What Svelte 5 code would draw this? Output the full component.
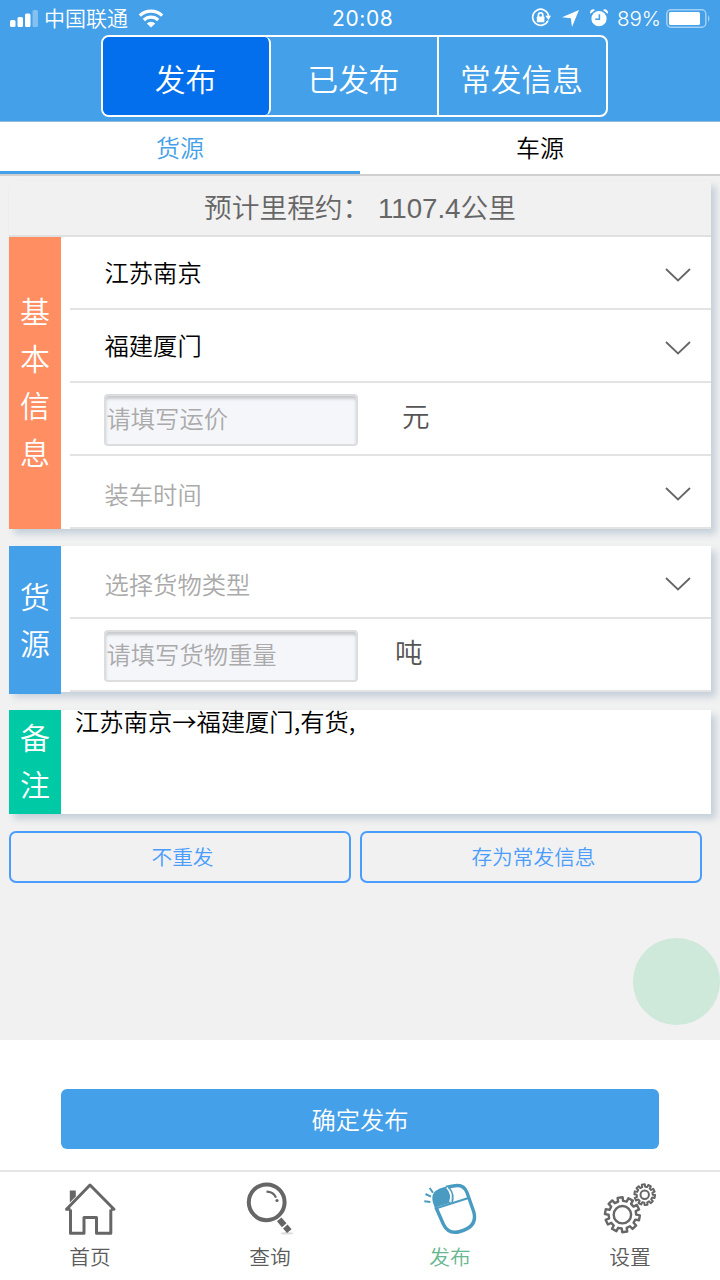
<script lang="ts">
	const segments = ['发布', '已发布', '常发信息'];
	const tabs = ['货源', '车源'];
	const navItems = [
		{ id: 'home', label: '首页' },
		{ id: 'search', label: '查询' },
		{ id: 'publish', label: '发布' },
		{ id: 'settings', label: '设置' }
	];

	let segment = $state(0);
	let tab = $state(0);
	let nav = $state('publish');
	let price = $state('');
	let weight = $state('');
	let remark = $state('江苏南京→福建厦门,有货,');

	// outline of a cog centred on cx, cy
	function gear(cx: number, cy: number, outer: number, inner: number, teeth: number, turn = 0) {
		const step = (Math.PI * 2) / teeth;
		const points: string[] = [];
		for (let i = 0; i < teeth; i++) {
			const a = i * step + turn;
			for (const [offset, r] of [[-0.29, inner], [-0.23, outer], [0.23, outer], [0.29, inner]]) {
				const t = a + offset * step;
				points.push(`${(cx + Math.cos(t) * r).toFixed(2)} ${(cy + Math.sin(t) * r).toFixed(2)}`);
			}
		}
		return `M${points.join('L')}Z`;
	}
</script>

{#snippet chevron()}
	<svg class="chevron" viewBox="0 0 26 15" width="26" height="15">
		<path d="M1 2L13 13.5L25 2" />
	</svg>
{/snippet}

{#snippet selectRow(text: string, placeholder: boolean)}
	<button class="row select" class:placeholder>
		<span>{text}</span>
		{@render chevron()}
	</button>
{/snippet}

<div class="app">
	<header>
		<div class="status">
			<svg class="signal" viewBox="0 0 28 18" width="28" height="18">
				<rect x="0" y="11" width="5.5" height="7" rx="1.5" />
				<rect x="7.5" y="8" width="5.5" height="10" rx="1.5" />
				<rect x="15" y="4.5" width="5.5" height="13.5" rx="1.5" />
				<rect x="22.5" y="1" width="5.5" height="17" rx="1.5" opacity="0.35" />
			</svg>
			<span class="carrier">中国联通</span>
			<svg class="wifi" viewBox="0 0 26 19" width="26" height="19">
				<path d="M1.8 6.6a16 16 0 0 1 22.4 0" />
				<path d="M5.8 11a10.3 10.3 0 0 1 14.4 0" />
				<path class="dot" d="M8.8 14.4a6 6 0 0 1 8.4 0L13 18.5z" />
			</svg>
			<span class="clock">20:08</span>
			<div class="status-right">
				<svg class="lock" viewBox="0 0 20 20" width="20" height="20">
					<path class="line" d="M17 12.5A8 8 0 1 1 17.6 8.2" />
					<path d="M14.2 7.7h5.8l-2.5 4.2z" />
					<rect x="5.8" y="8.5" width="7.6" height="5.8" rx="0.8" />
					<path class="line" d="M7.4 9V7.1a2.2 2.2 0 0 1 4.4 0V9" />
				</svg>
				<svg class="arrow" viewBox="0 0 17 17" width="17" height="17">
					<path d="M17 0L10 17L8.8 8.3L0 7.2z" />
				</svg>
				<svg class="alarm" viewBox="0 0 18 18" width="18" height="18">
					<circle cx="9" cy="9.7" r="7.6" />
					<path d="M0.5 4.8A3 3 0 0 1 5 1zM17.5 4.8A3 3 0 0 0 13 1z" />
					<path class="hands" d="M9.4 5.2v5H5.2" />
				</svg>
				<span class="percent">89%</span>
				<svg class="battery" viewBox="0 0 45 19" width="45" height="19">
					<rect class="shell" x="0.8" y="0.8" width="39" height="17.4" rx="4" />
					<rect x="3" y="3" width="31" height="13" rx="1.5" />
					<path d="M42 6q3 3.5 0 7z" opacity="0.5" />
				</svg>
			</div>
		</div>
		<div class="segments">
			{#each segments as label, i}
				<button class="segment" class:active={segment === i} onclick={() => (segment = i)}>{label}</button>
			{/each}
		</div>
	</header>

	<div class="tabs">
		{#each tabs as label, i}
			<button class="tab" class:active={tab === i} onclick={() => (tab = i)}>{label}</button>
		{/each}
	</div>

	<main>
		<section class="card">
			<div class="distance">预计里程约： <span>1107.4</span>公里</div>
			<div class="group">
				<div class="side orange">
					{#each '基本信息' as char}<span>{char}</span>{/each}
				</div>
				<div class="rows">
					{@render selectRow('江苏南京', false)}
					{@render selectRow('福建厦门', false)}
					<div class="row">
						<input placeholder="请填写运价" bind:value={price} />
						<span class="unit price">元</span>
					</div>
					{@render selectRow('装车时间', true)}
				</div>
			</div>
		</section>

		<section class="card goods">
			<div class="group">
				<div class="side blue">
					{#each '货源' as char}<span>{char}</span>{/each}
				</div>
				<div class="rows">
					{@render selectRow('选择货物类型', true)}
					<div class="row">
						<input placeholder="请填写货物重量" bind:value={weight} />
						<span class="unit">吨</span>
					</div>
				</div>
			</div>
		</section>

		<section class="card remark">
			<div class="side green">
				{#each '备注' as char}<span>{char}</span>{/each}
			</div>
			<textarea bind:value={remark}></textarea>
		</section>

		<div class="actions">
			<button>不重发</button>
			<button>存为常发信息</button>
		</div>
		<div class="bubble"></div>
	</main>

	<div class="submit">
		<button>确定发布</button>
	</div>

	<nav>
		{#each navItems as item}
			<button class="nav-item" class:active={nav === item.id} onclick={() => (nav = item.id)}>
				<svg viewBox="0 0 54 54" width="54" height="54">
					{#if item.id === 'home'}
						<path class="fill" d="M6.8 8.5h6v6l-6 6z" />
						<path class="stroke" d="M7.5 27.5V51.2H21V35.5H33.5V51.2H47.8V27.5M7.5 27.3H3.5L27 3L51 27.3H47.8" />
					{:else if item.id === 'search'}
						<ellipse cx="44" cy="51.3" rx="6.5" ry="1.3" fill="#ddd" />
						<circle class="stroke ring" cx="23.7" cy="20.3" r="17.9" />
						<path class="stroke arc" d="M23.5 9.6q7 0 9.5 6" />
						<circle class="fill" cx="34" cy="18.5" r="1.6" />
						<path class="handle" d="M36.2 37.4l5 5.8" />
						<path class="handle" d="M42.3 44.5l4 4.6" />
					{:else if item.id === 'publish'}
						<g class="mouse">
							<path class="button" d="M11.8 25.5C9.5 20 8.6 16 10 12.5C12 7.5 18 6 23.5 4.5C28 9 30 16 27.5 20.8Z" />
							<path class="body" d="M12.8 25L20.5 42.5C24 49.5 30 51.5 37 49.5C48 46.5 53.5 40 50.8 30L44 10.5C41.5 4 36 2.5 30 4L23 5.5" />
							<path class="divide" d="M12.5 26.5L45.5 16" />
							<path class="gap" d="M23.8 5.5Q29.8 12 26.8 20" />
							<path class="split" d="M26 5.5Q32 13 29 21" />
							<path class="spark" d="M6.7 6l3.3 4.7M2.5 12l5.500 2.7M1.3 19.2l6 .8" />
						</g>
					{:else}
						<path class="stroke cog" d={gear(19.4, 32.7, 17.5, 13.8, 10, 0.18)} />
						<circle class="stroke cog" cx="19.4" cy="32.7" r="8.7" />
						<path class="stroke cog small" d={gear(41.7, 12.7, 10.4, 8, 10, 0.18)} />
						<circle class="stroke cog small" cx="41.7" cy="12.7" r="4.2" />
					{/if}
				</svg>
				<span>{item.label}</span>
			</button>
		{/each}
	</nav>
</div>

<style>
	:global(body) {
		background: #fff;
	}

	.app {
		width: 720px;
		height: 1280px;
		display: flex;
		flex-direction: column;
		overflow: hidden;
		font-family: 'Liberation Sans', 'Noto Sans CJK SC', sans-serif;
		font-weight: 350;
		color: #000;
	}

	.app * {
		box-sizing: border-box;
	}

	button,
	input,
	textarea {
		font: inherit;
		color: inherit;
		background: none;
		border: 0;
		border-radius: 0;
		padding: 0;
		margin: 0;
		outline: 0;
	}

	header {
		height: 122px;
		flex: none;
		background: #44a0e8;
		border-bottom: 1px solid #93b7d6;
		color: #fff;
	}

	.status {
		height: 35px;
		display: flex;
		align-items: center;
		padding: 1px 10px 0;
		font-size: 21px;
		line-height: 34px;
		fill: #fff;
	}

	.carrier {
		margin-left: 6px;
		width: 84px;
		padding-top: 2px;
	}

	.wifi {
		margin-left: 10px;
		fill: none;
		stroke: #fff;
		stroke-width: 3.2;
	}

	.wifi .dot {
		fill: #fff;
		stroke: none;
	}

	.clock {
		margin-left: 168px;
		padding-top: 2px;
		width: 64px;
		font-family: Inter, sans-serif;
		font-weight: 400;
		font-size: 21px;
		letter-spacing: 0.6px;
	}

	.status-right {
		display: flex;
		align-items: center;
		margin-left: auto;
		margin-right: -1px;
	}

	.lock .line {
		fill: none;
		stroke: #fff;
		stroke-width: 1.7;
	}

	.arrow {
		margin-left: 11px;
	}

	.alarm {
		margin-left: 11px;
	}

	.alarm .hands {
		fill: none;
		stroke: #44a0e8;
		stroke-width: 1.5;
	}

	.percent {
		margin-left: 9px;
		padding-top: 2px;
		width: 44px;
		font-family: Inter, sans-serif;
		font-size: 20.5px;
		white-space: nowrap;
	}

	.battery {
		margin-left: 5px;
	}

	.battery .shell {
		fill: none;
		stroke: #fff;
		stroke-width: 1.5;
		opacity: 0.5;
	}

	.segments {
		display: grid;
		grid-template-columns: 168px 166px 169px;
		width: 507px;
		height: 82px;
		margin-left: 101px;
		border: 2px solid #fff;
		border-radius: 8px;
	}

	.segment {
		font-size: 30.7px;
		height: 78px;
		padding-top: 3px;
		padding-right: 1px;
		color: #fff;
	}

	.segment:last-child {
		border-left: 2px solid #fff;
		padding-right: 2px;
	}

	.segment.active {
		background: #036fec;
		background-clip: padding-box;
		border-right: 2px solid #fff;
		border-radius: 6px;
	}

	.tabs {
		display: flex;
		height: 54px;
		flex: none;
		border-bottom: 2px solid #d0d0d0;
	}

	.tab {
		flex: 1;
		font-size: 24px;
		height: 52px;
		padding-bottom: 1px;
		border-bottom: 3px solid transparent;
	}

	.tab.active {
		color: #44a0e8;
		border-color: #44a0e8;
	}

	main {
		position: relative;
		height: 864px;
		flex: none;
		padding: 5px 9px 0;
		background: #f1f1f1;
	}

	.card {
		width: 702px;
		background: #fff;
		box-shadow: 5px 5px 7px #c5d0da;
	}

	.distance {
		height: 56px;
		line-height: 55px;
		background: #f1f1f1;
		border-bottom: 2px solid #e0e0e0;
		text-align: center;
		font-size: 27.7px;
		color: #666;
	}

	.group {
		display: flex;
	}

	.side {
		width: 52px;
		flex: none;
		display: flex;
		flex-direction: column;
		justify-content: center;
		align-items: center;
		font-size: 30px;
		line-height: 47px;
		color: #fff;
	}

	.orange {
		background: #ff8e63;
	}

	.blue {
		background: #44a0e8;
	}

	.green {
		background: #00c9a5;
	}

	.rows {
		flex: 1;
		padding-left: 9px;
	}

	.row {
		display: flex;
		align-items: center;
		width: 100%;
		height: 73px;
		border-bottom: 2px solid #e3e3e3;
		padding-left: 34px;
		font-size: 24.3px;
		line-height: 36px;
	}

	.select {
		justify-content: space-between;
		padding-left: 34.5px;
		padding-right: 20px;
		padding-top: 4px;
	}

	.select span {
		margin-top: -1px;
	}

	.placeholder {
		color: #aaa;
	}

	.placeholder span {
		padding-top: 6px;
	}

	.chevron {
		fill: none;
		stroke: #666;
		stroke-width: 1.8;
	}

	input {
		width: 254px;
		height: 52px;
		margin-top: 2px;
		padding: 1px 0.5px 0;
		background: #f5f6fa;
		border: 2px solid #dcdddf;
		border-radius: 4px;
		box-shadow: inset 0 3px 3px #c9cbcf;
	}

	input::placeholder {
		color: #aaa;
		opacity: 1;
	}

	.unit {
		margin-left: 37px;
		padding-bottom: 2px;
		font-size: 27.6px;
		color: #555;
	}

	.unit.price {
		margin-left: 44px;
	}

	.goods {
		margin-top: 17px;
		height: 146px;
	}

	.goods .side {
		height: 148px;
		padding-top: 2px;
	}

	.remark {
		display: flex;
		margin-top: 18px;
		height: 104px;
	}

	textarea {
		flex: 1;
		padding: 0 14px;
		resize: none;
		font-family: 'Noto Sans CJK SC', sans-serif;
		font-size: 24.3px;
		line-height: 22px;
	}

	.actions {
		display: flex;
		gap: 9px;
		margin-top: 17px;
	}

	.actions button {
		width: 342px;
		height: 52px;
		padding: 0 0 2px 5px;
		border: 2px solid #4a9dfc;
		border-radius: 7px;
		font-size: 20.7px;
		color: #4a9dfc;
	}

	/* floating assistive button */
	.bubble {
		position: absolute;
		right: 0;
		bottom: 15px;
		width: 87px;
		height: 87px;
		border-radius: 50%;
		background: #cee8da;
	}

	.submit {
		height: 130px;
		flex: none;
		padding: 49px 61px 0;
	}

	.submit button {
		width: 598px;
		height: 60px;
		padding-bottom: 2px;
		border-radius: 6px;
		background: #44a0e8;
		color: #fff;
		font-size: 24.3px;
	}

	nav {
		display: flex;
		height: 110px;
		border-top: 2px solid #e5e5e5;
	}

	.nav-item {
		flex: 1;
		display: flex;
		flex-direction: column;
		align-items: center;
		padding-top: 10px;
		font-size: 20.7px;
		line-height: 30px;
		color: #5b5b5b;
	}

	.nav-item span {
		margin-top: 7px;
	}

	.nav-item.active {
		color: #67b791;
	}

	.stroke {
		fill: none;
		stroke: #666;
		stroke-width: 3;
		stroke-linejoin: round;
	}

	.fill {
		fill: #666;
	}

	.ring {
		stroke-width: 4;
	}

	.arc {
		stroke-width: 2.2;
	}

	.handle {
		stroke: #666;
		stroke-width: 6;
	}

	.cog {
		stroke-width: 2.4;
	}

	.cog.small {
		stroke-width: 2;
	}

	.mouse {
		fill: none;
		stroke: #4a9bc1;
		stroke-width: 2;
	}

	.mouse .button {
		fill: #4a9bc1;
		stroke: none;
	}

	.mouse .body {
		stroke-width: 3.4;
	}

	.mouse .gap {
		stroke: #fff;
		stroke-width: 1.5;
	}

	.mouse .split {
		stroke-width: 1.5;
	}
</style>
